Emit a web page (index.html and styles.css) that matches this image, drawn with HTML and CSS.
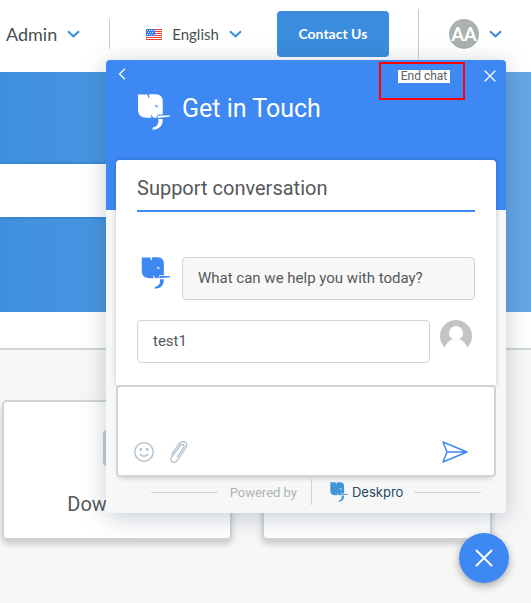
FILE: index.html
```html
<!DOCTYPE html>
<html lang="en">
<head>
<meta charset="utf-8">
<meta name="viewport" content="width=device-width, initial-scale=1">
<title>Support</title>
<link rel="stylesheet" href="styles.css">
</head>
<body>
<svg class="sprite" aria-hidden="true">
  <symbol id="elephant" viewBox="0 0 34 37">
    <path fill="currentColor" fill-rule="evenodd" d="M0 .5H9.600L10.400 3L11.300 4L11.800 3.200L11.300 .3H18.500C23 .5 25.500 3 25.500 7.500V21.200H20.500L19 24.500H16L13 21L13.200 23L14 24.500H9C3 24.500 0 21.500 0 16ZM17 11.600L18.500 13.200L20.800 13.800L20.300 12.500L18.800 11.600Z"/>
    <path fill="currentColor" d="M20.800 22H33.500L32 23.400L20 24.600ZM21 25.600H25.500C25.500 33 22 36.500 14.500 36.500L16 34C19.500 33.500 21.500 31 21 25.600Z"/>
  </symbol>
  <symbol id="chevron" viewBox="0 0 14 8">
    <path d="M1 1L7 6.500L13 1" fill="none" stroke="currentColor" stroke-width="2.200"/>
  </symbol>
  <symbol id="cross" viewBox="0 0 12 12">
    <path d="M1 1L11 11M11 1L1 11" fill="none" stroke="currentColor" stroke-width="1.300" stroke-linecap="round"/>
  </symbol>
</svg>

<header class="topbar">
  <button class="menu menu-admin">Admin <svg class="chevron"><use href="#chevron"/></svg></button>
  <span class="divider"></span>
  <button class="menu menu-language">
    <svg class="flag" viewBox="0 0 16 11" aria-hidden="true">
      <path fill="#fff" d="M0 0H16V11H0Z"/>
      <path stroke="#ff3a28" stroke-width="1.200" d="M0 .5H16M0 2.500H16M0 4.500H16M0 6.500H16M0 8.500H16M0 10.500H16"/>
      <path fill="#2f7bf0" d="M0 0H9V7H0Z"/>
      <path stroke="#fff" stroke-opacity=".8" stroke-dasharray="1 1" d="M1 1.500H8M2 3.500H8M1 5.500H8"/>
      <path fill="none" stroke="#a85a50" stroke-opacity=".3" d="M.5 .5H15.500V10.500H.5Z"/>
    </svg>
    English <svg class="chevron"><use href="#chevron"/></svg>
  </button>
  <a class="contact" href="#">Contact Us</a>
  <span class="divider divider-tall"></span>
  <button class="menu menu-user" aria-label="Account"><span class="initials">AA</span><svg class="chevron"><use href="#chevron"/></svg></button>
</header>

<section class="hero">
  <input class="search" type="search" aria-label="Search">
</section>
<div class="strip"></div>

<main class="tiles">
  <a class="tile" href="#"><span class="tile-icon"></span>Downloads</a>
  <a class="tile" href="#" aria-label="Help topic"></a>
</main>

<section class="widget" aria-label="Chat">
  <header class="widget-head">
    <div class="widget-bar">
      <button class="icon-button" aria-label="Back"><svg class="back" viewBox="0 0 8 12"><path d="M7 .7L1.500 6L7 11.300" fill="none" stroke="currentColor" stroke-width="1.300"/></svg></button>
      <div class="end-frame"><button class="end-chat">End chat</button></div>
      <button class="icon-button" aria-label="Close"><svg class="close"><use href="#cross"/></svg></button>
    </div>
    <div class="brand"><svg class="brand-logo"><use href="#elephant"/></svg><h1>Get in Touch</h1></div>
  </header>
  <div class="conversation">
    <h2>Support conversation</h2>
    <div class="message">
      <svg class="agent-logo"><use href="#elephant"/></svg>
      <p class="bubble bubble-agent">What can we help you with today?</p>
    </div>
    <div class="message message-own">
      <p class="bubble">test1</p>
      <svg class="person" viewBox="0 0 32 32" aria-hidden="true">
        <circle cx="16" cy="16" r="16" fill="#c4c4c4"/>
        <circle cx="16" cy="13" r="7" fill="#fff"/>
        <path fill="#fff" d="M4 29C7 22 10 19 16 19S25 22 28 29V32H4Z"/>
      </svg>
    </div>
  </div>
  <form class="composer">
    <textarea aria-label="Message"></textarea>
    <div class="tools">
      <button class="icon-button" type="button" aria-label="Emoji"><svg class="smile" viewBox="0 0 20 20"><g fill="none" stroke="currentColor" stroke-width="1.400"><circle cx="10" cy="10" r="9.200"/><path d="M6.300 12.500Q10 16 13.700 12.500" stroke-linecap="round" stroke-width="1.600"/></g><circle cx="6.800" cy="7.500" r="1.400" fill="currentColor"/><circle cx="13.200" cy="7.500" r="1.400" fill="currentColor"/></svg></button>
      <button class="icon-button" type="button" aria-label="Attach file"><svg class="clip" viewBox="0 0 18 22"><path d="M1.500 13.500L8.500 3.500C11 .2 13.500 .2 15.300 1.500C17.200 3 17.200 5 15.500 7.500L7.500 19C6 21.500 3.500 21.800 2 20.600S.6 17.500 2 15.500L10 4.800C11.200 3.200 12.500 3.200 13.500 4S14.300 6 13.200 7.500L7.500 15.800" fill="none" stroke="currentColor" stroke-width="1.300" stroke-linecap="round"/></svg></button>
      <button class="icon-button send" aria-label="Send"><svg class="plane" viewBox="0 0 26 22"><path d="M1 1L25 11L1 21L5 11ZM5 11H25" fill="none" stroke="currentColor" stroke-width="1.500" stroke-linejoin="round"/></svg></button>
    </div>
  </form>
  <footer class="powered">
    <span class="rule"></span>
    <span class="powered-label">Powered by</span>
    <a class="vendor" href="#"><svg class="vendor-logo"><use href="#elephant"/></svg>Deskpro</a>
    <span class="rule"></span>
  </footer>
</section>
<button class="launcher" aria-label="Close chat"><svg class="launcher-cross"><use href="#cross"/></svg></button>
</body>
</html>
```
FILE: styles.css
```css
* { box-sizing: border-box; }
body {
  margin: 0;
  min-height: 100vh;
  overflow-x: hidden;
  background: #f7f7f7;
  color: #55595a;
  font-family: Roboto, "Liberation Sans", sans-serif;
}
h1, h2, p { margin: 0; font-weight: 400; }
a { color: inherit; text-decoration: none; }
button { padding: 0; border: 0; background: none; color: inherit; font: inherit; cursor: pointer; }
svg { display: block; flex: none; }
.sprite { position: absolute; width: 0; height: 0; }

.topbar {
  display: flex;
  align-items: center;
  height: 72px;
  padding: 0 6px 4px;
  background: #fff;
  color: #4a4f51;
  font-family: Lato, sans-serif;
}
.menu { display: flex; align-items: center; gap: 10px; white-space: nowrap; }
.menu-admin { font-size: 18px; }
.menu-language { margin-left: 36px; font-size: 15px; }
.menu-user { margin-left: 30px; }
.chevron { width: 13px; height: 8px; color: #3a8dde; }
.flag { width: 16px; height: 11px; }
.divider { flex: none; width: 1px; height: 30px; margin-left: 29px; background: #c8cbcb; }
.divider-tall { height: 50px; }
.contact {
  flex: none;
  width: 112px;
  margin-left: 35px;
  border-radius: 4px;
  background: #3a8dde;
  color: #fff;
  font-size: 14px;
  font-weight: 700;
  line-height: 46px;
  text-align: center;
}
.initials {
  width: 30px;
  border-radius: 50%;
  background: #a9b2b1;
  color: #fff;
  font-size: 18px;
  font-weight: 700;
  line-height: 30px;
}

.hero {
  padding: 90px 80px 93px 0;
  background: linear-gradient(90deg, #4090df, #67a5e4);
}
.search {
  display: block;
  width: 100%;
  height: 57px;
  border: solid #3a87d2;
  border-width: 2px 0;
  background: #fff;
}
.strip { height: 38px; border-bottom: 2px solid #d0d5d4; background: #fff; }
.tiles { display: flex; gap: 30px; padding: 50px 2px; }
.tile {
  flex: 0 0 230px;
  display: flex;
  flex-direction: column;
  align-items: center;
  gap: 26px;
  height: 140px;
  padding-top: 28px;
  border: 2px solid #d0d5d4;
  border-radius: 5px;
  background: #fff;
  box-shadow: 0 4px 6px #00000030;
  font-size: 20px;
  line-height: 24px;
}
.tile-icon { width: 28px; height: 36px; border-radius: 4px; background: #c8cfce; }

.widget {
  position: absolute;
  top: 60px;
  right: 25px;
  width: min(400px, calc(100% - 50px));
  overflow: hidden;
  border-radius: 4px;
  background: linear-gradient(#3d88f3 150px, #f7f7f7 150px);
  box-shadow: 0 4px 24px #2a446044;
}
.widget-head { height: 100px; color: #fff; }
.widget-bar { display: flex; align-items: flex-start; padding: 2px 10px 0 12px; }
.widget-bar .icon-button { padding-top: 6px; }
.back { width: 8px; height: 12px; }
.close { width: 12px; height: 12px; margin-top: 2px; }
.end-frame {
  width: 86px;
  height: 38px;
  margin: 0 19px 0 auto;
  padding: 6px 0 0 4px;
  border: 2px solid #f00;
}
.end-chat {
  display: block;
  margin: 0 auto;
  padding: 0 3px;
  background: #fff;
  color: #5c6061;
  font-size: 12px;
  line-height: 13px;
}
.brand { display: flex; align-items: flex-start; gap: 11px; margin: -6px 0 0 32px; }
.brand-logo { width: 33px; height: 36px; }
.brand h1 { font-size: 25px; line-height: 30px; }

.conversation {
  min-height: 225px;
  margin: 0 10px;
  padding: 0 21px;
  border-radius: 4px 4px 0 0;
  background: #fff;
  box-shadow: 0 0 5px #0003;
}
.conversation h2 {
  margin-bottom: 45px;
  padding: 16px 0 9px;
  border-bottom: 2px solid #3d88f3;
  font-size: 20px;
  line-height: 25px;
}
.message { display: flex; gap: 10px; margin-bottom: 20px; padding-left: 4px; }
.message-own { margin-bottom: 0; padding: 0 3px 0 0; }
.agent-logo { width: 31px; height: 32px; color: #3d88f3; }
.person { width: 32px; height: 32px; }
.bubble {
  flex: 1;
  padding: 0 15px;
  border: 1px solid #d0d4d3;
  border-radius: 4px;
  font-size: 15px;
  line-height: 41px;
}
.bubble-agent { background: #f7f7f7; }

.composer {
  position: relative;
  display: flex;
  flex-direction: column;
  height: 92px;
  margin: 0 10px;
  border: 2px solid #d0d5d4;
  border-radius: 4px;
  background: #fff;
  box-shadow: 0 5px 5px -4px #0003;
}
.composer textarea { flex: 1; min-height: 0; border: 0; outline: 0; background: none; resize: none; font: inherit; }
.tools { display: flex; align-items: center; gap: 16px; padding: 0 26px 12px 16px; color: #b0c0cc; }
.smile { width: 20px; height: 20px; }
.clip { width: 18px; height: 22px; }
.send { margin-left: auto; color: #3d88f3; }
.plane { width: 26px; height: 22px; }

.powered { display: flex; align-items: center; height: 36px; padding: 0 25px 6px 45px; }
.rule { flex: 1; height: 1px; background: #d0d5d4; }
.powered-label { padding: 0 14px 0 12px; color: #adb5b4; font-size: 13px; }
.vendor {
  display: flex;
  align-items: center;
  gap: 3px;
  height: 26px;
  padding: 0 11px 0 18px;
  border-left: 1px solid #d0d5d4;
  color: #24475f;
  font-family: Inter, sans-serif;
  font-size: 13px;
}
.vendor-logo { width: 19px; height: 20px; color: #4196d7; }

.launcher {
  position: absolute;
  top: 533px;
  right: 22px;
  display: grid;
  place-items: center;
  width: 50px;
  height: 50px;
  border-radius: 50%;
  background: #3d88f3;
  box-shadow: 0 3px 8px #0005;
  color: #fff;
}
.launcher-cross { width: 18px; height: 18px; }
```
